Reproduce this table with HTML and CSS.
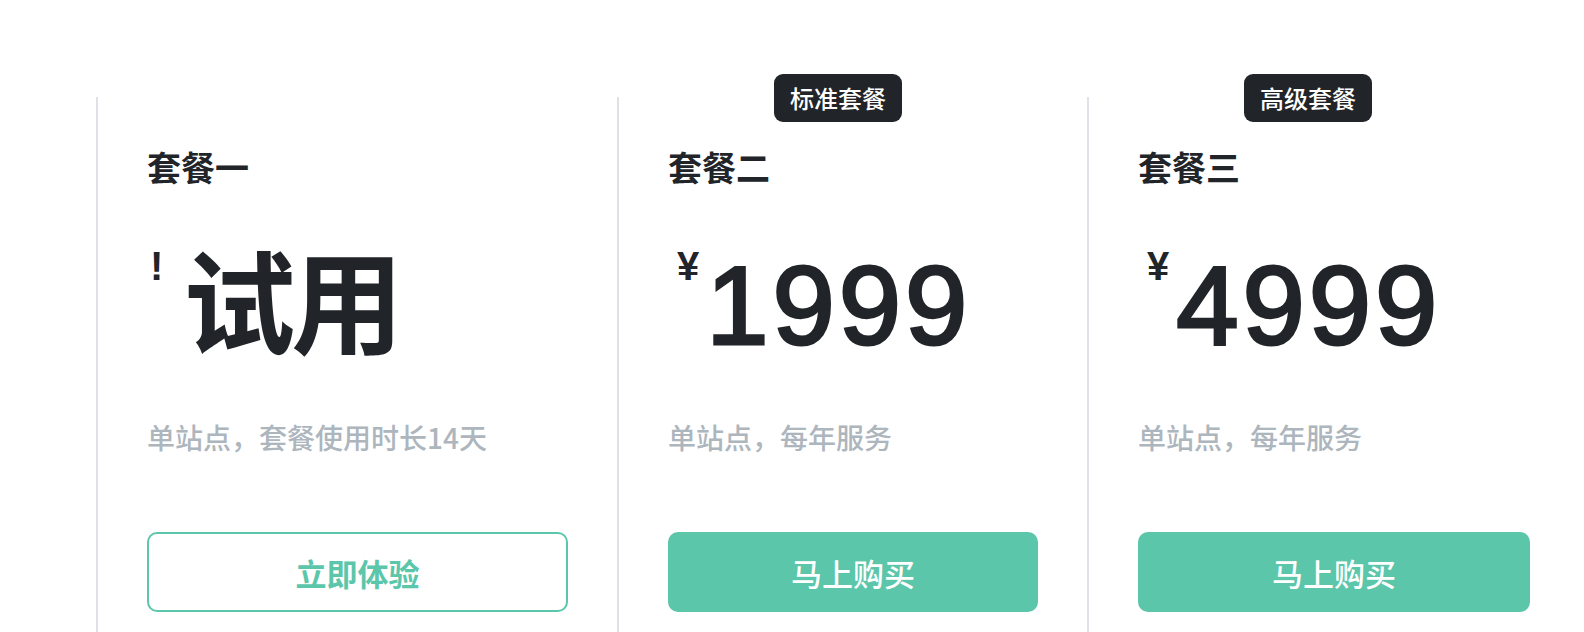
FILE: index.html
```html
<!DOCTYPE html>
<html lang="zh-CN">
<head>
<meta charset="utf-8">
<title>套餐</title>
<link rel="stylesheet" href="styles.css">
</head>
<body>
<div class="plans">
  <div class="plan">
    <div class="plan-name">套餐一</div>
    <div class="price">
      <span class="currency currency-note">!</span>
      <span class="amount amount-cjk">试用</span>
    </div>
    <div class="desc">单站点，套餐使用时长14天</div>
    <button class="btn btn-outline">立即体验</button>
  </div>
  <div class="plan">
    <span class="badge">标准套餐</span>
    <div class="plan-name">套餐二</div>
    <div class="price">
      <span class="currency">¥</span>
      <span class="amount">1999</span>
    </div>
    <div class="desc">单站点，每年服务</div>
    <button class="btn btn-fill">马上购买</button>
  </div>
  <div class="plan">
    <span class="badge">高级套餐</span>
    <div class="plan-name">套餐三</div>
    <div class="price">
      <span class="currency">¥</span>
      <span class="amount">4999</span>
    </div>
    <div class="desc">单站点，每年服务</div>
    <button class="btn btn-fill">马上购买</button>
  </div>
</div>
</body>
</html>
```

FILE: styles.css
```css
* { box-sizing: border-box; }
html, body {
  margin: 0;
  padding: 0;
  background: #ffffff;
  overflow: hidden;
}
body {
  font-family: "Noto Sans CJK SC", "Noto Sans", sans-serif;
  color: #212529;
  width: 1584px;
  height: 632px;
}
.plans {
  display: grid;
  grid-template-columns: 521px 470px 492px;
  padding: 97px 0 0 96px;
}
.plan {
  position: relative;
  border-left: 2px solid #dee2e6;
  padding: 50px 49px 60px 49px;
  display: flex;
  flex-direction: column;
}
.badge {
  position: absolute;
  top: -23px;
  left: 155px;
  height: 48px;
  padding: 0 16px;
  background: #212529;
  color: #ffffff;
  border-radius: 9px;
  font-size: 24px;
  font-weight: 500;
  line-height: 48px;
  white-space: nowrap;
}
.plan-name {
  font-size: 34px;
  line-height: 40px;
  font-weight: 700;
}
.price {
  display: flex;
  align-items: flex-start;
  margin-top: 61px;
  height: 116px;
}
.currency {
  font-family: "Liberation Sans", Arial, sans-serif;
  font-size: 40px;
  line-height: 40px;
  font-weight: 700;
  margin-left: 9px;
  margin-right: 7px;
  margin-top: -2px;
}
.currency-note {
  margin-left: 3px;
  margin-right: 4px;
}
.amount {
  font-family: "Liberation Sans", Arial, sans-serif;
  font-size: 112px;
  line-height: 116px;
  font-weight: 400;
  letter-spacing: 4px;
  -webkit-text-stroke: 3px #212529;
}
.amount-cjk {
  font-family: "Noto Sans CJK SC", sans-serif;
  font-size: 112px;
  font-weight: 700;
  letter-spacing: -4px;
  -webkit-text-stroke: 0;
  margin-left: 16px;
  margin-top: -9px;
}
.desc {
  margin-top: 53px;
  font-size: 28px;
  line-height: 40px;
  font-weight: 500;
  color: #adb5bd;
  white-space: nowrap;
}
.btn {
  margin-top: 75px;
  height: 80px;
  width: 100%;
  border-radius: 10px;
  font-family: "Noto Sans CJK SC", sans-serif;
  font-size: 31px;
  font-weight: 500;
  cursor: pointer;
}
.btn-outline {
  background: #ffffff;
  border: 2px solid #5cc6aa;
  color: #5cc6aa;
  font-weight: 700;
}
.btn-fill {
  background: #5cc6aa;
  border: 2px solid #5cc6aa;
  color: #ffffff;
}
```
